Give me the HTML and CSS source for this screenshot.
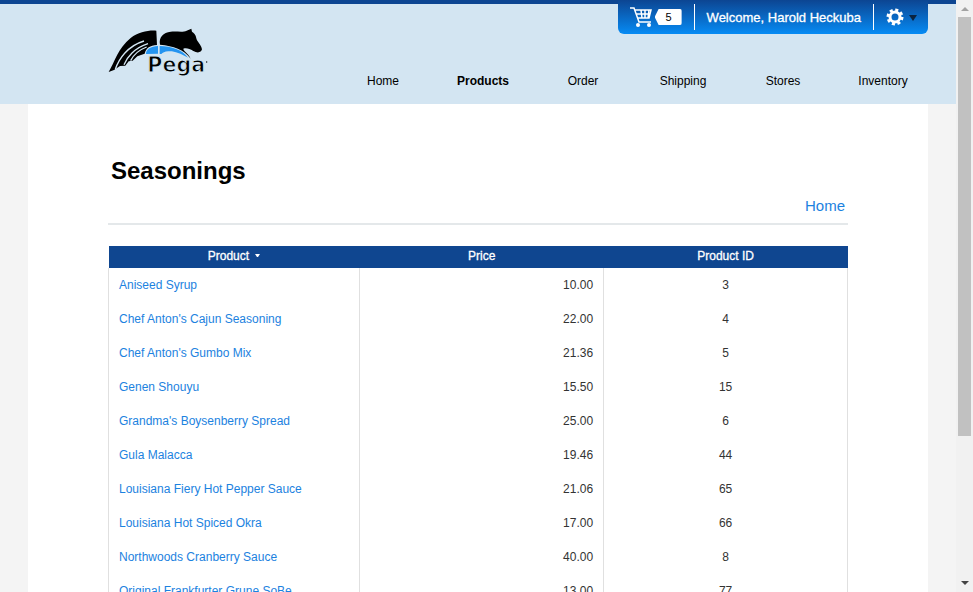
FILE: index.html
```html
<!DOCTYPE html>
<html lang="en">
<head>
<meta charset="utf-8">
<title>Seasonings</title>
<link rel="stylesheet" href="styles.css">
</head>
<body>
<div class="viewport">
  <div class="page">
    <header class="header">
      <div class="header-inner">
        <a class="logo" href="#" aria-label="Pega">
          <svg class="logo-art" viewBox="24 0 300 195" aria-hidden="true">
            <path d="M26 156C44 126 54 84 92 54C116 36 146 30 169 32L171 75C150 76 138 84 134 101L112 109L98 122L86 124L76 137L60 138L42 150Z"/>
            <path class="logo-gap" d="M46 148C56 118 82 78 132 63M72 134C80 114 102 84 144 71M92 122C100 106 116 90 140 81"/>
            <path d="M180 74C176 50 190 38 212 35C232 33 248 38 260 32L274 26L276 35C288 42 288 52 291 61C297 70 305 79 306 88C304 98 292 100 280 93C268 85 258 83 250 86C250 94 264 98 272 116C252 88 220 78 180 74Z"/>
            <path class="logo-accent" d="M138 102C138 88 152 79 174 78L174 101ZM179 78C214 78 248 90 264 113C240 99 220 92 205 94C194 95 188 98 184 102L179 102Z"/>
            <text class="logo-name" x="142" y="157">Pega</text>
            <circle cx="320" cy="126" r="2"/>
          </svg>
        </a>
        <nav class="nav">
          <a href="#">Home</a>
          <a class="current" href="#">Products</a>
          <a href="#">Order</a>
          <a href="#">Shipping</a>
          <a href="#">Stores</a>
          <a href="#">Inventory</a>
        </nav>
      </div>
      <div class="userbar">
        <a class="cart" href="#" aria-label="Cart, 5 items">
          <svg class="cart-icon" viewBox="0 0 24 22" aria-hidden="true">
            <path d="M0 2H4L9 16H21M5 4H21L19 12H8M6 8H20M11 4L12 12M15 4V12M19 4L18 12"/>
            <circle cx="8" cy="19" r="2"/><circle cx="19" cy="19" r="2"/>
          </svg>
          <span class="count">5</span>
        </a>
        <span class="welcome">Welcome, Harold Heckuba</span>
        <button class="settings" type="button" aria-label="Settings">
          <svg class="gear" viewBox="0 0 18 18" aria-hidden="true">
            <circle class="teeth" cx="9" cy="9" r="7"/>
            <circle class="ring" cx="9" cy="9" r="5"/>
          </svg>
          <svg class="caret" viewBox="0 0 8 8" aria-hidden="true"><path d="M0 2H8L4 8Z"/></svg>
        </button>
      </div>
    </header>
    <main class="content">
      <h1>Seasonings</h1>
      <div class="crumb"><a href="#">Home</a></div>
      <table class="products">
        <thead>
          <tr><th class="name">Product <svg class="sort" viewBox="0 0 5 3" aria-hidden="true"><path d="M0 0H5L3 3H2Z"/></svg></th><th>Price</th><th>Product ID</th></tr>
        </thead>
        <tbody>
          <tr><td><a href="#">Aniseed Syrup</a></td><td>10.00</td><td>3</td></tr>
          <tr><td><a href="#">Chef Anton's Cajun Seasoning</a></td><td>22.00</td><td>4</td></tr>
          <tr><td><a href="#">Chef Anton's Gumbo Mix</a></td><td>21.36</td><td>5</td></tr>
          <tr><td><a href="#">Genen Shouyu</a></td><td>15.50</td><td>15</td></tr>
          <tr><td><a href="#">Grandma's Boysenberry Spread</a></td><td>25.00</td><td>6</td></tr>
          <tr><td><a href="#">Gula Malacca</a></td><td>19.46</td><td>44</td></tr>
          <tr><td><a href="#">Louisiana Fiery Hot Pepper Sauce</a></td><td>21.06</td><td>65</td></tr>
          <tr><td><a href="#">Louisiana Hot Spiced Okra</a></td><td>17.00</td><td>66</td></tr>
          <tr><td><a href="#">Northwoods Cranberry Sauce</a></td><td>40.00</td><td>8</td></tr>
          <tr><td><a href="#">Original Frankfurter Grune SoBe</a></td><td>13.00</td><td>77</td></tr>
        </tbody>
      </table>
    </main>
  </div>
  <div class="scrollbar" aria-hidden="true">
    <svg class="arrow up" viewBox="0 0 8 4"><path d="M0 4L4 0L8 4Z"/></svg>
    <div class="track"><div class="thumb"></div></div>
    <svg class="arrow down" viewBox="0 0 8 4"><path d="M0 0H8L4 4Z"/></svg>
  </div>
</div>
</body>
</html>
```
FILE: styles.css
```css
* { box-sizing: border-box; }
body {
  margin: 0;
  font: 12px/16px "Liberation Sans", Arial, sans-serif;
  color: #333;
  background: #f4f4f4;
}
a { color: #1c82e0; text-decoration: none; }
.viewport { display: flex; height: 100vh; overflow: hidden; }
.page { flex: 1; min-width: 0; }

/* Header */
.header {
  position: relative;
  height: 104px;
  padding: 0 28px;
  border-top: 4px solid #0c4592;
  background: #d3e5f2;
}
.header-inner {
  display: flex;
  justify-content: space-between;
  align-items: flex-start;
  padding-left: 80px;
  padding-top: 16px;
}
.logo { color: #000; }
.logo-art { display: block; width: 100px; height: 65px; overflow: visible; }
.logo-accent { fill: #2494f0; }
.logo-gap { fill: none; stroke: #d3e5f2; stroke-width: 4; }
.logo-name { font: bold 62px "DejaVu Sans", sans-serif; stroke: #d3e5f2; stroke-width: 3; }
.nav { display: grid; grid-template-columns: repeat(6, 100px); padding-top: 53px; margin-right: -5px; text-align: center; }
.nav a { color: #000; }
.nav .current { font-weight: bold; }

.userbar {
  position: absolute;
  top: -4px;
  right: 28px;
  display: flex;
  align-items: center;
  height: 34px;
  padding: 4px 0;
  border-radius: 0 0 6px 6px;
  background: linear-gradient(#0c4592, #068bf4);
  color: #fff;
}
.cart { display: flex; align-items: center; gap: 1px; width: 76px; height: 26px; padding-left: 12px; }
.cart-icon { width: 24px; height: 22px; fill: #fff; }
.cart-icon path { fill: none; stroke: #fff; stroke-width: 1.5; }
.count {
  width: 27px;
  padding-left: 1px;
  border-radius: 2px;
  background: #fff;
  clip-path: polygon(4px 0, 100% 0, 100% 100%, 4px 100%, 0 50%);
  color: #000;
  font-size: 11px;
  text-align: center;
}
.welcome { height: 26px; padding: 0 12px; border: solid #fff; border-width: 0 1px; font-size: 13px; line-height: 27px; -webkit-text-stroke: 0.3px #fff; }
.settings { display: flex; align-items: center; gap: 5px; padding: 0 11px 0 12px; border: 0; background: none; }
.gear { width: 18px; height: 18px; fill: none; stroke: #fff; }
.teeth { stroke-width: 3; stroke-dasharray: 3 2.5; }
.ring { stroke-width: 3; }
.caret { width: 8px; height: 8px; fill: #0a2340; }

/* Content */
.content { min-height: 100vh; margin: 0 28px; padding: 52px 80px 0; background: #fff; }
h1 { margin: 0; padding-left: 3px; color: #000; font-size: 24px; line-height: 30px; }
.crumb { margin-top: 12px; padding: 0 3px 9px; border-bottom: 2px solid #e4e8ea; font-size: 15px; line-height: 16px; text-align: right; }

.products { width: 100%; margin-top: 21px; border-collapse: collapse; table-layout: fixed; }
.products th { height: 22px; padding: 2px 0; background: #0f4690; color: #fff; font-weight: normal; vertical-align: top; -webkit-text-stroke: 0.3px #fff; }
.products .name { width: 34%; }
.products td { height: 34px; padding: 0 10px; border: 1px solid #e0e0e0; border-width: 0 1px; text-align: center; }
.products td:first-child { text-align: left; }
.products td:nth-child(2) { text-align: right; }
.sort { width: 5px; height: 3px; margin-left: 3px; vertical-align: 3px; fill: #fff; }

/* Scrollbar */
.scrollbar { display: flex; flex-direction: column; align-items: center; width: 17px; padding: 7px 0; background: #f1f1f1; }
.arrow { width: 8px; height: 4px; fill: #444; }
.up { fill: #a3a3a3; }
.track { flex: 1; width: 13px; margin: 6px 0; }
.thumb { height: 75%; background: #c1c1c1; }
```
